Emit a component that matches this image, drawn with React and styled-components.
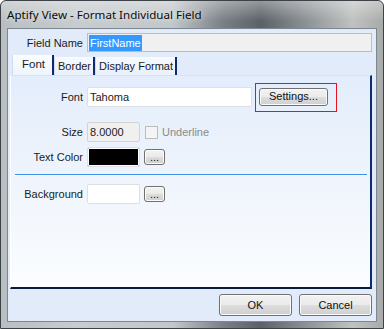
import React from 'react'
import styled, { createGlobalStyle } from 'styled-components'

const GlobalStyle = createGlobalStyle`
  html, body {
    margin: 0;
    padding: 0;
    background: #ffffff;
  }
  body {
    font-family: "Liberation Sans", Arial, sans-serif;
    font-size: 11px;
    color: #1b1b1b;
  }
`

const FormatFieldDialog = () => {
  const i18n = {
    title: 'Aptify View - Format Individual Field',
    fieldName: 'Field Name',
    tabs: ['Font', 'Border', 'Display Format'],
    font: 'Font',
    size: 'Size',
    underline: 'Underline',
    textColor: 'Text Color',
    background: 'Background',
    settings: 'Settings...',
    ok: 'OK',
    cancel: 'Cancel',
  }

  return (
    <Window>
      <TitleBar>{i18n.title}</TitleBar>
      <Client>
        <FieldRow>
          <Label>{i18n.fieldName}</Label>
          <NameBox>
            <Selected>FirstName</Selected>
          </NameBox>
        </FieldRow>

        <TabStrip>
          {i18n.tabs.map((t, i) => (
            <Tab key={t} active={i === 0}>
              {t}
            </Tab>
          ))}
        </TabStrip>

        <Panel>
          <Row>
            <Label>{i18n.font}</Label>
            <Inline>
              <TextBox width={165}>Tahoma</TextBox>
              <Highlight>
                <Button width={69} height={18}>
                  {i18n.settings}
                </Button>
              </Highlight>
            </Inline>
          </Row>

          <Row top={15}>
            <Label>{i18n.size}</Label>
            <Inline>
              <TextBox width={53} disabled>
                8.0000
              </TextBox>
              <Check />
              <Muted>{i18n.underline}</Muted>
            </Inline>
          </Row>

          <Row top={5}>
            <Label>{i18n.textColor}</Label>
            <Inline gap={4}>
              <Swatch color="#000000" />
              <Button width={21} height={16}>
                ...
              </Button>
            </Inline>
          </Row>

          <Separator />

          <Row>
            <Label>{i18n.background}</Label>
            <Inline gap={4}>
              <Swatch color="#ffffff" />
              <Button width={21} height={16}>
                ...
              </Button>
            </Inline>
          </Row>
        </Panel>

        <Footer>
          <Button width={73} height={22}>
            {i18n.ok}
          </Button>
          <Button width={73} height={22}>
            {i18n.cancel}
          </Button>
        </Footer>
      </Client>
    </Window>
  )
}

const Window = styled.div`
  box-sizing: border-box;
  width: 384px;
  height: 329px;
  display: flex;
  flex-direction: column;
  border: 1px solid #3c4248;
  border-radius: 6px 6px 0 0;
  background:
    linear-gradient(180deg, rgba(255, 255, 255, 0.35) 0px, rgba(255, 255, 255, 0) 20px),
    linear-gradient(90deg, #b9bec1 0%, #c7cccf 20%, #c2c7ca 45%, #7a8085 58%, #5b6166 68%, #8d9296 80%, #bfc2c0 92%, #a8aba9 100%);
  overflow: hidden;
`

const TitleBar = styled.div`
  height: 27px;
  padding-left: 6px;
  display: flex;
  align-items: center;
  font-family: "Noto Sans", "Liberation Sans", sans-serif;
  font-size: 11.6px;
  color: #0b0b0b;
  text-shadow: 0 0 6px rgba(255, 255, 255, 0.9);
`

const Client = styled.div`
  flex: 1;
  margin: 0 6px 6px 6px;
  border: 1px solid #7b8690;
  background: #e1ebfa;
  display: flex;
  flex-direction: column;
  padding: 0 4px 0 0;
`

const FieldRow = styled.div`
  display: grid;
  grid-template-columns: 75px 1fr;
  column-gap: 4px;
  align-items: center;
  margin-top: 4px;
`

const Label = styled.div`
  text-align: right;
  white-space: nowrap;
`

const NameBox = styled.div`
  box-sizing: border-box;
  height: 19px;
  border: 1px solid #9cc4ec;
  background: #f0f0f0;
  display: flex;
  align-items: center;
  padding-left: 1px;
`

const Selected = styled.span`
  background: #3399ff;
  color: #ffffff;
  padding: 1px 1px;
  line-height: 14px;
`

const TabStrip = styled.div`
  display: flex;
  margin: 3px 0 0 4px;
  height: 20px;
  align-items: flex-end;
`

const Tab = styled.div`
  box-sizing: border-box;
  height: ${(p) => (p.active ? '20px' : '18px')};
  padding: ${(p) => (p.active ? '0 7px 3px 9px' : '0 2px 1px 3px')};
  display: flex;
  align-items: center;
  font-size: ${(p) => (p.active ? '11.5px' : '11px')};
  background: ${(p) =>
    p.active
      ? 'linear-gradient(180deg, #fbfdff 0%, #eef4fd 100%)'
      : 'linear-gradient(180deg, #f7faff 0%, #e9f0fb 100%)'};
  border-right: 2px solid #0d2b6e;
  border-left: 1px solid #cfdbee;
`

const Panel = styled.div`
  box-sizing: border-box;
  height: 214px;
  margin-left: 2px;
  padding: 11px 0 0 0;
  border-top: 1px solid #d7e2f2;
  border-left: 1px solid #ffffff;
  border-right: 2px solid #0d2b6e;
  border-bottom: 2px solid #0a1a3a;
  background: linear-gradient(180deg, #e3edfb 0%, #edf3fc 40%, #fbfdff 100%);
`

const Row = styled.div`
  display: grid;
  grid-template-columns: 72px 1fr;
  column-gap: 4px;
  align-items: center;
  margin-top: ${(p) => p.top || 0}px;
`

const Inline = styled.div`
  display: flex;
  align-items: center;
  gap: ${(p) => (p.gap === undefined ? 8 : p.gap)}px;
`

const TextBox = styled.div`
  box-sizing: border-box;
  width: ${(p) => p.width}px;
  height: 20px;
  border: 1px solid ${(p) => (p.disabled ? '#d3d3d3' : '#dcdfe3')};
  border-radius: 2px;
  background: ${(p) => (p.disabled ? '#f0f0f0' : '#ffffff')};
  padding-left: 2px;
  display: flex;
  align-items: center;
`

const Highlight = styled.div`
  display: flex;
  margin: -6px -9px -6px -5px;
  padding: 4px 8px 5px 3px;
  border: 1px solid #e3131f;
`

const Button = styled.div`
  box-sizing: border-box;
  width: ${(p) => p.width}px;
  height: ${(p) => p.height}px;
  border: 1px solid #707070;
  border-radius: 3px;
  box-shadow: inset 0 0 0 1px #fbfbfb;
  background: linear-gradient(180deg, #f2f2f2 0%, #ebebeb 48%, #dddddd 52%, #cfcfcf 100%);
  display: flex;
  align-items: center;
  justify-content: center;
  color: #111111;
  line-height: 1;
`

const Check = styled.div`
  box-sizing: border-box;
  width: 13px;
  height: 13px;
  margin-left: -3px;
  border: 1px solid #bcbcbc;
  background: #f4f4f4;
`

const Muted = styled.span`
  color: #8a8a8a;
  margin-left: -4px;
`

const Swatch = styled.div`
  box-sizing: border-box;
  width: 53px;
  height: 20px;
  border: 1px solid #dcdfe3;
  border-radius: 2px;
  background: ${(p) => p.color};
  box-shadow: inset 0 0 0 1px #ffffff;
`

const Separator = styled.div`
  margin: 7px 3px 8px 4px;
  border-top: 1px solid #3a92e8;
  border-bottom: 1px solid #ffffff;
`

const Footer = styled.div`
  display: flex;
  justify-content: flex-end;
  gap: 7px;
  padding: 5px 0 0 0;
`

const App = () => (
  <>
    <GlobalStyle />
    <FormatFieldDialog />
  </>
)

export default App
